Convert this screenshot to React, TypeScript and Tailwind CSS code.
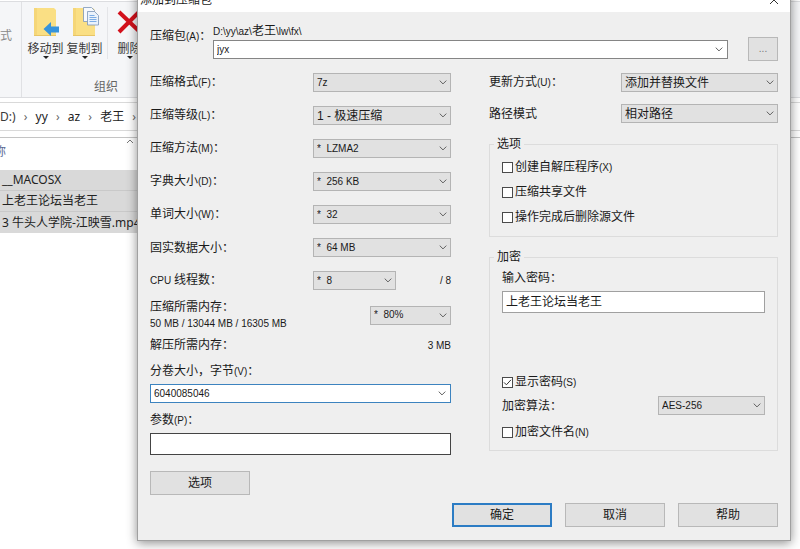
import { useState, type ReactNode } from 'react';
import { clsx } from 'clsx';

type Option = { id: string; label: string; value: string; mixed?: boolean };

const SANS = "font-['Liberation_Sans','Noto_Sans_CJK_SC',sans-serif]";
const EXPLORER = "font-['Noto_Sans','Noto_Sans_CJK_SC',sans-serif]";

const leftOptions: Option[] = [
    { id: 'format', label: '压缩格式(F)：', value: '7z' },
    { id: 'level', label: '压缩等级(L)：', value: '1 - 极速压缩', mixed: true },
    { id: 'method', label: '压缩方法(M)：', value: '*\u00a0\u00a0LZMA2' },
    { id: 'dict', label: '字典大小(D)：', value: '*\u00a0\u00a0256 KB' },
    { id: 'word', label: '单词大小(W)：', value: '*\u00a0\u00a032' },
    { id: 'solid', label: '固实数据大小：', value: '*\u00a0\u00a064 MB' },
];

const crumbs = ['yy', 'az', '老王'];
const files = ['__MACOSX', '上老王论坛当老王', '3 牛头人学院-江映雪.mp4'];

// Latin runs are one step smaller than the Chinese text around them
function Text({ children }: { children: string }) {
    return (
        <>
            {children.split(/([\x20-\x7e]+)/).map((part, i) =>
                i % 2 ? <span key={i} className="text-[10px]">{part}</span> : part
            )}
        </>
    );
}

function Chevron() {
    return (
        <svg viewBox="0 0 8 5" className="pointer-events-none h-[5px] w-2" fill="none" stroke="#606060">
            <path d="M0.7 0.6 4 3.9 7.3 0.6" />
        </svg>
    );
}

function Dropdown({ id, value, mixed, className }: { id: string; value: string; mixed?: boolean; className?: string }) {
    return (
        <div className={clsx('relative h-[19px] shrink-0', className)}>
            <select
                id={id}
                className={clsx(
                    'block h-full w-full appearance-none border border-[#b4b4b4] bg-[#e1e1e1] pl-[3px] pr-4 leading-4 outline-none',
                    mixed ? 'text-xs' : 'text-[10px]'
                )}
            >
                <option>{value}</option>
            </select>
            <span className="pointer-events-none absolute inset-y-0 right-1 flex items-center"><Chevron /></span>
        </div>
    );
}

function Combo({ id, value, focused }: { id: string; value: string; focused?: boolean }) {
    const [text, setText] = useState(value);
    return (
        <div className={clsx('flex h-[19px] items-center border bg-white', focused ? 'border-[#3c83bf]' : 'border-[#858585]')}>
            <input id={id} value={text} onChange={e => setText(e.target.value)} className="h-full min-w-0 flex-1 pl-[3px] text-[10px] outline-none" />
            <button type="button" aria-label="展开" className="flex h-full w-4 items-center justify-center"><Chevron /></button>
        </div>
    );
}

function Check({ label, checked = false, className }: { label: string; checked?: boolean; className?: string }) {
    return (
        <label className={clsx('flex h-4 items-center gap-[2px]', className)}>
            <span className="relative flex h-[11px] w-[11px] items-center justify-center">
                <input type="checkbox" defaultChecked={checked} className="peer h-[11px] w-[11px] appearance-none border border-[#4a4a4a] bg-white" />
                <svg viewBox="0 0 9 9" className="pointer-events-none absolute hidden h-[9px] w-[9px] peer-checked:block" fill="none" stroke="#333">
                    <path d="M1 4.4 3.4 6.8 8 1.8" />
                </svg>
            </span>
            <span><Text>{label}</Text></span>
        </label>
    );
}

function PushButton({ children, primary, className }: { children: ReactNode; primary?: boolean; className?: string }) {
    return (
        <button
            type="button"
            className={clsx('h-6 bg-[#e1e1e1]', primary ? 'border-2 border-[#2c7cc4]' : 'border border-[#b8b8b8]', className)}
        >
            {children}
        </button>
    );
}

function FolderIcon({ copy }: { copy?: boolean }) {
    return (
        <svg viewBox="0 0 28 32" className="h-8 w-7">
            <path d="M2 1h20l2 2v26H2z" fill="#fadf84" />
            <path d="M2 1h3v28H2z" fill="#f5d678" />
            <path d="M2 28h22v1H2z" fill="#e8c566" />
            {copy ? (
                <g stroke="#7b95b8" strokeWidth=".8">
                    <path d="M12.500 .5h8l3 3v11h-11z" fill="#f6f9fd" />
                    <path d="M16.500 4.500h7l4 4v9.500h-11z" fill="#eaf2fb" />
                    <path d="M18.500 8.500h5M18.500 10.500h7M18.500 12.500h7M18.500 14.500h7" stroke="#5f9be0" />
                </g>
            ) : (
                <path d="M11.500 22 19 15v4.500h8v6h-8V29z" fill="#3694dc" />
            )}
        </svg>
    );
}

function RibbonButton({ icon, label }: { icon: ReactNode; label: string }) {
    return (
        <button type="button" className="flex w-[39px] shrink-0 flex-col items-center whitespace-nowrap">
            {icon}
            <span className="mt-[3px] leading-[14px]">{label}</span>
            <svg viewBox="0 0 6 3" className="h-[3px] w-[6px]"><path d="M0 0h6L3 3z" fill="#222" /></svg>
        </button>
    );
}

function Explorer() {
    return (
        <div className={clsx('min-h-screen bg-white text-xs text-[#3a3a3a]', EXPLORER)}>
            <div className="h-[2px] border-b border-[#dcdde0]" />
            <div className="flex h-24 border-b border-[#dcdde0] bg-[#f5f6f8]">
                <div className="flex w-[22px] items-center border-r border-[#e0e1e4] pb-7 text-[#8a8a8a]">式</div>
                <div className="flex flex-col pl-1 pt-[5px]">
                    <div className="flex">
                        <RibbonButton icon={<FolderIcon />} label="移动到" />
                        <RibbonButton icon={<FolderIcon copy />} label="复制到" />
                        <div className="ml-[3px] border-l border-[#e4e5e8] pl-[2px]">
                            <RibbonButton
                                icon={
                                    <svg viewBox="0 0 28 32" className="h-8 w-7" stroke="#d3111c" strokeWidth="4">
                                        <path d="M3 5 25 26M23 5 3 25" />
                                    </svg>
                                }
                                label="删除"
                            />
                        </div>
                    </div>
                    <span className="pl-[68px] pt-5 leading-4 text-[#666]">组织</span>
                </div>
            </div>
            <nav className="mt-1 flex h-[29px] items-center border-y border-[#d9d9d9]">
                <span>D:)</span>
                {crumbs.map(c => (
                    <span key={c} className="flex items-center">
                        <span className="w-5 text-center text-[#666]">›</span>
                        <a href="#" className="text-[#222]">{c}</a>
                    </span>
                ))}
                <span className="w-5 text-center text-[#666]">›</span>
            </nav>
            <div className="mt-[6px] border-t border-[#c4c4c4]">
                <div className="flex h-8 w-[137px] items-start justify-between">
                    <span className="-ml-[6px] pt-[6px] text-[#5a6a94]">称</span>
                    <svg viewBox="0 0 8 5" className="mr-[3px] mt-px h-[5px] w-2" fill="none" stroke="#777"><path d="M1 4 4 1 7 4" /></svg>
                </div>
                <ul className="w-[150px] text-[#222]">
                    {files.map(f => (
                        <li key={f} className="flex h-[21px] items-center whitespace-nowrap border-b border-[#c9c9c9] bg-[#d9d9d9] pl-[2px] last:border-b-0">{f}</li>
                    ))}
                </ul>
            </div>
        </div>
    );
}

function ArchiveDialog() {
    const [password, setPassword] = useState('上老王论坛当老王');
    return (
        <div
            role="dialog"
            aria-label="添加到压缩包"
            className={clsx('absolute -top-4 left-[137px] right-[9px] border-b border-l border-r border-[#a0a0a0] bg-[#efefef] text-xs leading-4 text-[#1a1a1a] shadow-[0_2px_10px_rgba(0,0,0,0.45)]', SANS)}
        >
            <div className="flex h-7 items-center justify-between bg-white pl-[2px] pr-3 pt-1">
                <span>添加到压缩包</span>
                <button type="button" aria-label="关闭">
                    <svg viewBox="0 0 8 8" className="h-2 w-2" stroke="#333"><path d="M0 0 8 8M8 0 0 8" /></svg>
                </button>
            </div>

            <form className="px-3 pb-[13px] pt-3" onSubmit={e => e.preventDefault()}>
                <div className="flex">
                    <label htmlFor="archive" className="w-[63px] shrink-0 whitespace-nowrap leading-6"><Text>压缩包(A)：</Text></label>
                    <div className="min-w-0 flex-1">
                        <div className="mb-[2px] h-[14px] leading-[14px]"><Text>D:\yy\az\老王\lw\fx\</Text></div>
                        <Combo id="archive" value="jyx" />
                    </div>
                    <PushButton className="ml-5 mt-[13px] w-[30px] text-[10px] text-[#777]">...</PushButton>
                </div>

                <div className="mt-3 grid grid-cols-[301fr_289fr] gap-x-[38px]">
                    <div>
                        <div className="flex flex-col gap-[14px]">
                            {leftOptions.map(o => (
                                <div key={o.id} className="flex items-center justify-between">
                                    <label htmlFor={o.id}><Text>{o.label}</Text></label>
                                    <Dropdown id={o.id} value={o.value} mixed={o.mixed} className="w-[138px]" />
                                </div>
                            ))}
                            <div className="flex items-center">
                                <label htmlFor="threads" className="flex-1"><Text>CPU 线程数：</Text></label>
                                <div className="flex w-[138px] items-center justify-between">
                                    <Dropdown id="threads" value={'*\u00a0\u00a08'} className="w-[83px]" />
                                    <span><Text>/ 8</Text></span>
                                </div>
                            </div>
                        </div>
                        <div className="mt-[9px] flex items-center justify-between">
                            <div>
                                <label htmlFor="memory" className="block">压缩所需内存：</label>
                                <div className="h-4"><Text>50 MB / 13044 MB / 16305 MB</Text></div>
                            </div>
                            <Dropdown id="memory" value={'*\u00a0\u00a080%'} className="w-[81px]" />
                        </div>
                        <div className="mt-[6px] flex justify-between">
                            <span>解压所需内存：</span>
                            <span><Text>3 MB</Text></span>
                        </div>
                        <label htmlFor="volume" className="mb-[5px] mt-[9px] block h-4"><Text>分卷大小，字节(V)：</Text></label>
                        <Combo id="volume" value="6040085046" focused />
                        <label htmlFor="params" className="mb-[5px] mt-[9px] block h-4"><Text>参数(P)：</Text></label>
                        <input id="params" className="block h-[22px] w-full border border-[#444] bg-white px-[3px] outline-none" />
                        <PushButton className="mt-4 block w-[100px]">选项</PushButton>
                    </div>

                    <div>
                        <div className="flex items-center justify-between">
                            <label htmlFor="update"><Text>更新方式(U)：</Text></label>
                            <Dropdown id="update" value="添加并替换文件" mixed className="w-[157px]" />
                        </div>
                        <div className="mt-3 flex items-center justify-between">
                            <label htmlFor="pathmode">路径模式</label>
                            <Dropdown id="pathmode" value="相对路径" mixed className="w-[157px]" />
                        </div>
                        <fieldset className="mt-[13px] border border-[#dcdcdc] px-3 pb-[11px]">
                            <legend className="-ml-2 px-[3px]">选项</legend>
                            <div className="flex flex-col gap-[9px] pt-[7px]">
                                <Check label="创建自解压程序(X)" />
                                <Check label="压缩共享文件" />
                                <Check label="操作完成后删除源文件" />
                            </div>
                        </fieldset>
                        <fieldset className="mt-3 border border-[#dcdcdc] px-3 pb-[10px]">
                            <legend className="-ml-2 px-[3px]">加密</legend>
                            <label htmlFor="password" className="mb-[5px] block pt-[5px]">输入密码：</label>
                            <input
                                id="password"
                                value={password}
                                onChange={e => setPassword(e.target.value)}
                                className="block h-[22px] w-full border border-[#a0a0a0] bg-white px-[3px] pb-1 outline-none"
                            />
                            <Check label="显示密码(S)" checked className="mt-[61px]" />
                            <div className="mt-[6px] flex items-center justify-between">
                                <label htmlFor="cipher">加密算法：</label>
                                <Dropdown id="cipher" value="AES-256" className="w-[107px]" />
                            </div>
                            <Check label="加密文件名(N)" className="mt-[9px]" />
                        </fieldset>
                    </div>
                </div>

                <div className="mt-2 flex justify-end gap-[13px]">
                    <PushButton primary className="w-[100px]">确定</PushButton>
                    <PushButton className="w-[100px]">取消</PushButton>
                    <PushButton className="w-[100px]">帮助</PushButton>
                </div>
            </form>
        </div>
    );
}

export default function App() {
    return (
        <main className="relative min-h-screen overflow-hidden">
            <Explorer />
            <ArchiveDialog />
        </main>
    );
}
